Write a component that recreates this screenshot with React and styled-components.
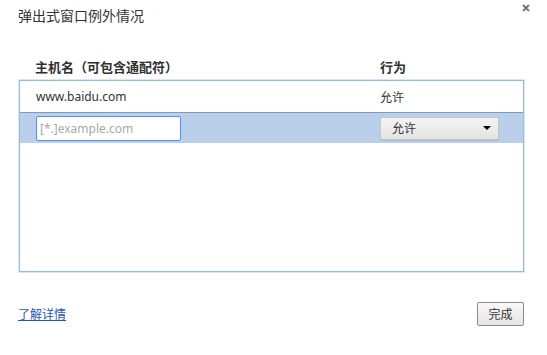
import React, { useState } from 'react'
import styled, { createGlobalStyle } from 'styled-components'

const GlobalStyle = createGlobalStyle`
  html, body {
    margin: 0;
    padding: 0;
    background: #fff;
  }
  body {
    font-family: "Noto Sans", "Noto Sans CJK SC", sans-serif;
    color: #333;
  }
`

const Dialog = styled.div`
  position: relative;
  width: 547px;
  height: 355px;
  box-sizing: border-box;
  padding: 5px 23px 0 19px;
  display: flex;
  flex-direction: column;
`

const Title = styled.div`
  margin-left: -1px;
  font-size: 14px;
  line-height: 22px;
  color: #333;
`

const Close = styled.svg`
  position: absolute;
  top: 4px;
  right: 17px;
  width: 8px;
  height: 8px;
  cursor: pointer;
`

const HeaderRow = styled.div`
  display: grid;
  grid-template-columns: 360px 1fr;
  margin-top: 32px;
  height: 21px;
  align-items: start;
  font-size: 13px;
  font-weight: bold;
  color: #303030;

  span {
    padding-left: 16px;
    line-height: 16px;
  }
`

const ListBox = styled.div`
  height: 192px;
  box-sizing: border-box;
  border: 1px solid #8fbbee;
  box-shadow: 0 0 0 1px #e2e6ea;
  display: flex;
  flex-direction: column;
`

const Row = styled.div`
  display: grid;
  grid-template-columns: 360px 1fr;
  align-items: center;
  height: ${p => (p.editing ? '30px' : '31px')};
  background: ${p => (p.editing ? '#bacfe9' : '#fff')};
  border-bottom: ${p => (p.editing ? 'none' : '1px solid #7f9cc0')};
  font-size: 12px;
  color: #333;
`

const Cell = styled.div`
  padding-left: ${p => p.pad ?? 16}px;
`

const HostInput = styled.input`
  width: 145px;
  height: 25px;
  box-sizing: border-box;
  border: 1px solid #4d90fe;
  border-radius: 2px;
  padding: 0 3px;
  font-family: "Noto Sans", "Noto Sans CJK SC", sans-serif;
  font-size: 12px;
  color: #333;
  outline: none;
  background: #fff;

  &::placeholder {
    color: #a8a8a8;
  }
`

const SelectBox = styled.div`
  width: 119px;
  height: 23px;
  box-sizing: border-box;
  border: 1px solid #c6c6c6;
  border-radius: 2px;
  background: linear-gradient(#f4f4f4, #e3e3e3);
  box-shadow: 0 1px 1px rgba(0, 0, 0, 0.1);
  display: flex;
  align-items: center;
  justify-content: space-between;
  padding: 0 7px 0 11px;
  font-size: 12px;
  color: #333;
`

const Arrow = styled.span`
  width: 0;
  height: 0;
  border-left: 4px solid transparent;
  border-right: 4px solid transparent;
  border-top: 4px solid #000;
`

const Footer = styled.div`
  display: flex;
  justify-content: space-between;
  align-items: center;
  margin-top: 30px;
`

const Link = styled.a`
  margin-left: -1px;
  font-size: 12px;
  color: #1e55cc;
  text-decoration: underline;
  cursor: pointer;
`

const Button = styled.button`
  width: 47px;
  height: 24px;
  box-sizing: border-box;
  border: 1px solid #8a8a8a;
  border-radius: 2px;
  background: linear-gradient(#f8f8f8, #e5e5e5);
  font-family: "Noto Sans", "Noto Sans CJK SC", sans-serif;
  font-size: 12px;
  color: #333;
  padding: 0;
`

const exceptions = [{ host: 'www.baidu.com', action: '允许' }]

export default function App() {
  const [host, setHost] = useState('')

  return (
    <>
      <GlobalStyle />
      <Dialog>
        <Title>弹出式窗口例外情况</Title>
        <Close viewBox='0 0 8 8'>
          <path d='M1 1 L7 7 M7 1 L1 7' stroke='#777' strokeWidth='2' />
        </Close>
        <HeaderRow>
          <span>主机名（可包含通配符）</span>
          <span style={{ paddingLeft: 1 }}>行为</span>
        </HeaderRow>
        <ListBox>
          {exceptions.map(({ host, action }) => (
            <Row key={host}>
              <Cell>{host}</Cell>
              <Cell pad={0}>{action}</Cell>
            </Row>
          ))}
          <Row editing>
            <Cell>
              <HostInput
                placeholder='[*.]example.com'
                value={host}
                onChange={e => setHost(e.target.value)}
              />
            </Cell>
            <Cell pad={0}>
              <SelectBox>
                <span>允许</span>
                <Arrow />
              </SelectBox>
            </Cell>
          </Row>
        </ListBox>
        <Footer>
          <Link>了解详情</Link>
          <Button>完成</Button>
        </Footer>
      </Dialog>
    </>
  )
}
